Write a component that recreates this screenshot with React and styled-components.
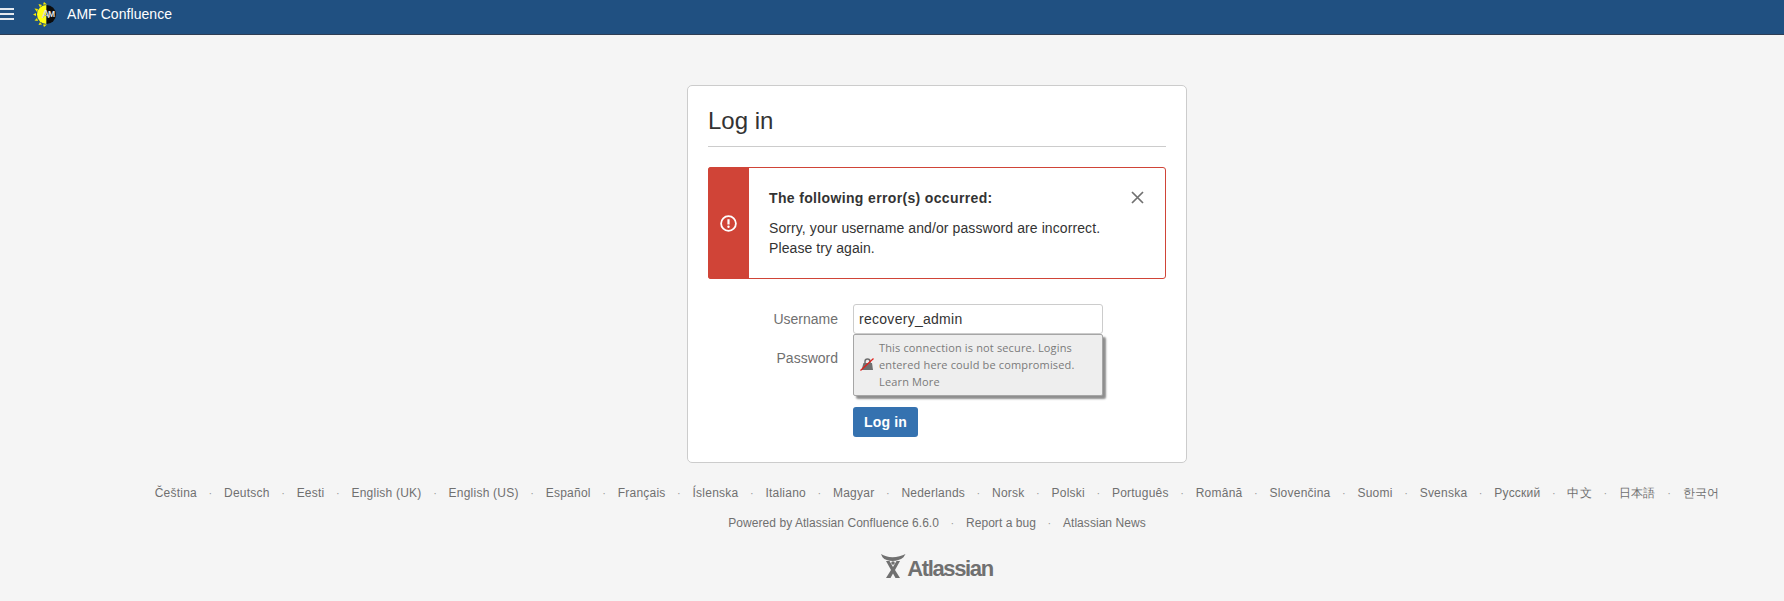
import React from "react";
import styled, { createGlobalStyle } from "styled-components";

const Global = createGlobalStyle`
  html, body { margin: 0; padding: 0; background: #f5f5f5; }
  body { font-family: "Liberation Sans", Arial, sans-serif; font-size: 14px; color: #333; }
`;

const Page = styled.div`
  width: 1784px;
  height: 601px;
  overflow: hidden;
  background: #f5f5f5;
`;

const Header = styled.header`
  height: 34px;
  box-sizing: content-box;
  background: #205081;
  border-bottom: 1px solid #2e3d54;
  display: flex;
  align-items: flex-start;
  color: #fff;
`;

const Burger = styled.svg`
  width: 14px;
  height: 14px;
  margin-top: 7px;
  flex: none;
`;

const SiteLogo = styled.svg`
  width: 26px;
  height: 26px;
  margin: 1px 0 0 19px;
  flex: none;
`;

const SiteName = styled.a`
  margin: 5px 0 0 8px;
  font-size: 14px;
  line-height: 18px;
  letter-spacing: 0.06px;
  color: #fff;
`;

const Main = styled.main`
  padding-left: 90px;
  display: flex;
  flex-direction: column;
  align-items: center;
`;

const Card = styled.section`
  box-sizing: border-box;
  width: 500px;
  height: 378px;
  margin-top: 50px;
  padding: 20px;
  background: #fff;
  border: 1px solid #ccc;
  border-radius: 5px;
`;

const Title = styled.h1`
  margin: 0;
  height: 41px;
  padding-top: 1px;
  box-sizing: border-box;
  font-size: 24px;
  line-height: 28px;
  font-weight: 400;
  color: #333;
  border-bottom: 1px solid #ccc;
`;

const Alert = styled.div`
  box-sizing: border-box;
  position: relative;
  height: 112px;
  margin-top: 20px;
  padding: 20px 20px 0 60px;
  background: #fff;
  border: 1px solid #d04437;
  border-radius: 3px;
`;

const AlertBar = styled.div`
  position: absolute;
  left: -1px;
  top: -1px;
  bottom: -1px;
  width: 41px;
  background: #d04437;
  border-radius: 3px 0 0 3px;
  display: flex;
  align-items: center;
  justify-content: center;
`;

const AlertTitle = styled.p`
  margin: 0 0 10px;
  font-size: 14px;
  line-height: 20px;
  font-weight: 700;
  letter-spacing: 0.35px;
  color: #333;
`;

const AlertText = styled.p`
  margin: 0;
  width: 350px;
  font-size: 14px;
  line-height: 20px;
  letter-spacing: 0.09px;
  color: #333;
`;

const Close = styled.svg`
  position: absolute;
  right: 20px;
  top: 22px;
  width: 15px;
  height: 15px;
`;

const Form = styled.form`
  position: relative;
  margin-top: 25px;
  display: grid;
  grid-template-columns: 130px 250px;
  column-gap: 15px;
  row-gap: 9px;
  align-items: center;
`;

const Label = styled.label`
  text-align: right;
  font-size: 14px;
  line-height: 20px;
  color: #707070;
`;

const Input = styled.input`
  box-sizing: border-box;
  width: 250px;
  height: 30px;
  padding: 0 5px;
  font: 14px "Liberation Sans", Arial, sans-serif;
  letter-spacing: 0.28px;
  color: #333;
  background: #fff;
  border: 1px solid #ccc;
  border-radius: 3px;
  outline: none;
`;

const Button = styled.button`
  grid-column: 2;
  justify-self: start;
  margin-top: 25px;
  height: 30px;
  width: 65px;
  padding: 0;
  font: 700 14px "Liberation Sans", Arial, sans-serif;
  letter-spacing: 0.2px;
  color: #fff;
  background: #3572b0;
  border: 0;
  border-radius: 3px;
`;

const Warning = styled.div`
  box-sizing: border-box;
  position: absolute;
  left: 145px;
  top: 30px;
  width: 250px;
  height: 62px;
  padding: 4px 6px 0 25px;
  background: #eee;
  border: 1px solid #a6a6a6;
  border-radius: 2px;
  box-shadow: 3px 3px 2px #8e8e8e;
  font-family: "Open Sans", "Noto Sans", sans-serif;
  font-size: 11px;
  line-height: 17px;
  letter-spacing: 0.15px;
  color: #7a7a7a;
  white-space: nowrap;
`;

const LockIcon = styled.svg`
  position: absolute;
  left: 6px;
  top: 22px;
  width: 14px;
  height: 14px;
`;

const LangRow = styled.nav`
  margin-top: 22px;
  display: flex;
  align-items: center;
  white-space: nowrap;
  font-size: 12px;
  line-height: 16px;
  letter-spacing: 0.23px;
  color: #707070;
`;

const FootRow = styled(LangRow)`
  margin-top: 14px;
  letter-spacing: 0.05px;
`;

const Sep = styled.span`
  width: 27px;
  text-align: center;
  color: #999;
  font-size: 11px;
`;

const BrandLink = styled.a`
  margin-top: 23px;
  display: flex;
  align-items: flex-start;
  color: #707070;
`;

const BrandMark = styled.svg`
  width: 26px;
  height: 24px;
  flex: none;
`;

const BrandText = styled.span`
  margin-top: 3px;
  font-family: "Liberation Sans", Arial, sans-serif;
  font-weight: 700;
  font-size: 22px;
  line-height: 24px;
  letter-spacing: -1.35px;
`;

const langs = ["Čeština","Deutsch","Eesti","English (UK)","English (US)","Español","Français","Íslenska","Italiano","Magyar","Nederlands","Norsk","Polski","Português","Română","Slovenčina","Suomi","Svenska","Русский","中文","日本語","한국어"];
const foot = ["Powered by Atlassian Confluence 6.6.0","Report a bug","Atlassian News"];

const Links = ({ items }) => items.map((t, i) => (
  <React.Fragment key={t}>
    {i > 0 && <Sep>·</Sep>}
    <span>{t}</span>
  </React.Fragment>
));

export default function App() {
  return (
    <Page>
      <Global />
      <Header>
        <Burger viewBox="0 0 14 14"><path d="M0 2h14M0 7h14M0 12h14" stroke="#e4e9ef" strokeWidth="2" /></Burger>
        <SiteLogo viewBox="0 0 26 26">
          <path d="M11 1l3 2.500h-4zM5.500 3l3.500 1-2 2.500zM1.500 7.500l3.500.5-1 3zM0 13.500l3-1.500v3zM1.500 19.500l2.500-2.500 1 3zM5.500 24l1.500-3 2 2.500zM11 26l-1-2.500h4z" fill="#f5e800" />
          <path d="M13.500 4a9.500 9.500 0 0 0 0 19z" fill="#ffff14" />
          <path d="M13.500 4a9.500 9.500 0 0 1 0 19z" fill="#0c0c0c" />
          <text x="9" y="17" fontFamily="Liberation Sans" fontSize="11" fill="#fff" stroke="#555" strokeWidth="0.2">A</text>
          <text x="15" y="16" fontFamily="Liberation Sans" fontSize="8.500" fontWeight="700" fill="#e6e6e6">M</text>
        </SiteLogo>
        <SiteName>AMF Confluence</SiteName>
      </Header>
      <Main>
        <Card>
          <Title>Log in</Title>
          <Alert>
            <AlertBar>
              <svg width="17" height="17" viewBox="0 0 17 17">
                <circle cx="8.500" cy="8.500" r="7.400" fill="none" stroke="#fff" strokeWidth="1.800" />
                <path d="M8.500 4.200v5.300" stroke="#fff" strokeWidth="2.200" />
                <circle cx="8.500" cy="11.800" r="1.200" fill="#fff" />
              </svg>
            </AlertBar>
            <AlertTitle>The following error(s) occurred:</AlertTitle>
            <AlertText>Sorry, your username and/or password are incorrect. Please try again.</AlertText>
            <Close viewBox="0 0 15 15"><path d="M2 2l11 11M13 2L2 13" stroke="#707070" strokeWidth="1.700" /></Close>
          </Alert>
          <Form>
            <Label>Username</Label>
            <Input defaultValue="recovery_admin" />
            <Label>Password</Label>
            <Input type="password" />
            <Button type="button">Log in</Button>
            <Warning>
              <LockIcon viewBox="0 0 14 14">
                <path d="M5 6V4.500a2.500 2.500 0 0 1 5 0V6" fill="none" stroke="#6f6f6f" strokeWidth="1.500" />
                <path d="M3.500 6h8.500l1 7H1.500z" fill="#6f6f6f" />
                <path d="M0.500 13.500L13.500 1.500" stroke="#e0201b" strokeWidth="1.200" />
              </LockIcon>
              This connection is not secure. Logins<br />
              entered here could be compromised.<br />
              Learn More
            </Warning>
          </Form>
        </Card>
        <LangRow><Links items={langs} /></LangRow>
        <FootRow><Links items={foot} /></FootRow>
        <BrandLink>
          <BrandMark viewBox="0 0 26 24">
            <path d="M0 0c3 2 7 3.200 11.500 3.200S21 2 24.500 0l-2 3.200c-3 2.500-7 3.800-11 3.800S3.500 5.700 1.500 3.200z" fill="#707070" />
            <circle cx="12" cy="9" r="1.800" fill="#707070" />
            <path d="M5 7h3.500l3.500 6 3.500-6H19l-5 9 5 8h-4.500L12 19.500 9.500 24H5l5-8z" fill="#707070" />
          </BrandMark>
          <BrandText>Atlassian</BrandText>
        </BrandLink>
      </Main>
    </Page>
  );
}
